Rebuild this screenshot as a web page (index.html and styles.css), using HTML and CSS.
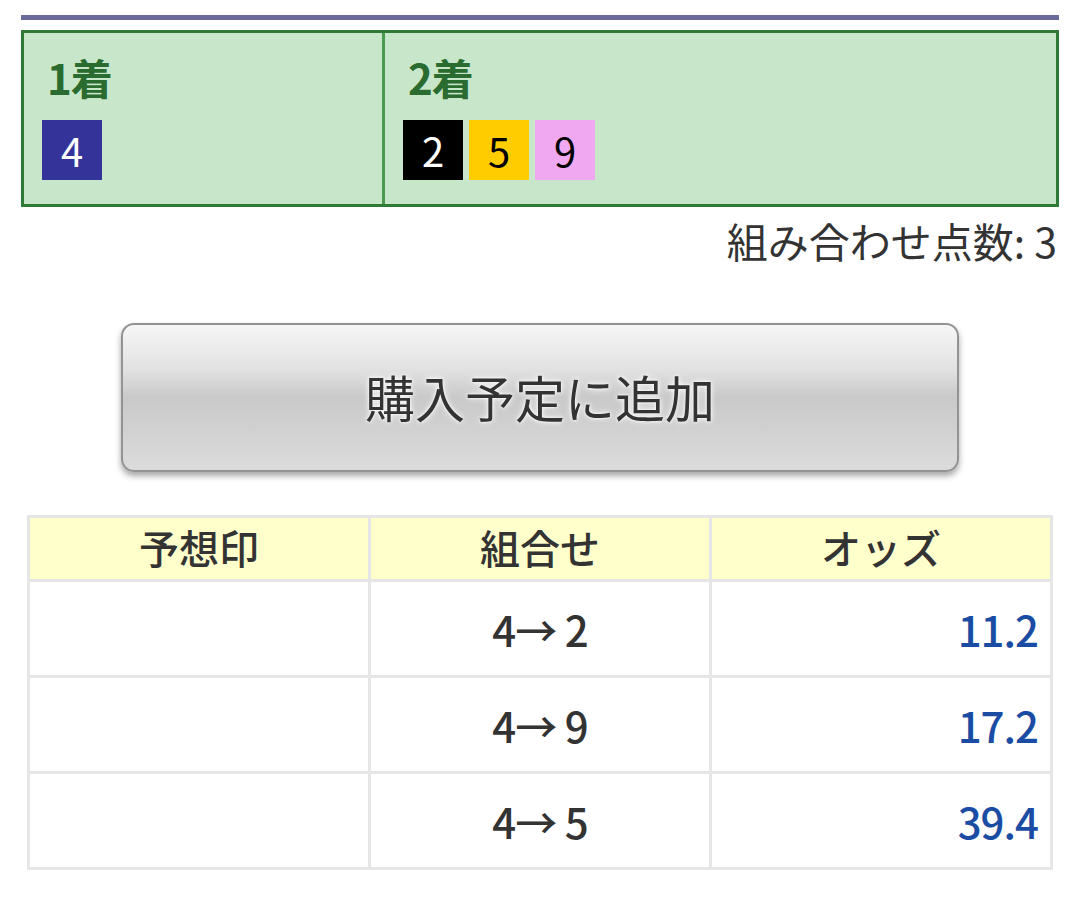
FILE: index.html
```html
<!DOCTYPE html>
<html lang="ja">
<head>
<meta charset="utf-8">
<link rel="stylesheet" href="styles.css">
</head>
<body>
<div class="page">
  <div class="topbar"></div>
  <div class="picks">
    <div class="pick pick-first">
      <div class="pick-title">1着</div>
      <div class="badges">
        <span class="badge b4">4</span>
      </div>
    </div>
    <div class="pick">
      <div class="pick-title">2着</div>
      <div class="badges">
        <span class="badge b2">2</span>
        <span class="badge b5">5</span>
        <span class="badge b9">9</span>
      </div>
    </div>
  </div>
  <div class="count">組み合わせ点数: 3</div>
  <div class="btn-wrap">
    <button class="add-btn">購入予定に追加</button>
  </div>
  <div class="odds-table">
    <div class="th">予想印</div>
    <div class="th">組合せ</div>
    <div class="th">オッズ</div>

    <div class="td"></div>
    <div class="td combo">4→ 2</div>
    <div class="td odds">11.2</div>

    <div class="td"></div>
    <div class="td combo">4→ 9</div>
    <div class="td odds">17.2</div>

    <div class="td"></div>
    <div class="td combo">4→ 5</div>
    <div class="td odds">39.4</div>
  </div>
</div>
</body>
</html>
```

FILE: styles.css
```css
* { box-sizing: border-box; }
html, body { margin: 0; padding: 0; background: #fff; }
body {
  font-family: "Noto Sans CJK JP", "Noto Sans", sans-serif;
  color: #333;
}
.page {
  padding: 15px 21px 0;
}
.topbar {
  height: 5px;
  background: #6b6b9b;
}
.picks {
  margin-top: 10px;
  display: grid;
  grid-template-columns: 361px 1fr;
  border: 3px solid #2f7a34;
  background: #c8e6c9;
  height: 177px;
}
.pick {
  padding: 15px 18px 0;
}
.pick-first {
  border-right: 3px solid #4b9b4f;
}
.pick-title {
  font-size: 42px;
  line-height: 58px;
  font-weight: bold;
  color: #2a6b2f;
  margin-left: 5px;
  letter-spacing: -1px;
}
.badges {
  margin-top: 14px;
  display: flex;
  gap: 6px;
}
.badge {
  width: 60px;
  height: 60px;
  display: flex;
  align-items: center;
  justify-content: center;
  font-size: 40px;
  font-weight: 400;
  line-height: 1;
}
.b4 { background: #333399; color: #fff; }
.b2 { background: #000; color: #fff; }
.b5 { background: #ffcc00; color: #000; }
.b9 { background: #f0a8f0; color: #000; }
.count {
  margin-top: 5px;
  text-align: right;
  font-size: 41px;
  line-height: 57px;
  color: #333;
  padding-right: 2px;
}
.btn-wrap {
  display: flex;
  justify-content: center;
  margin-top: 54px;
}
.add-btn {
  width: 838px;
  height: 149px;
  border: 2px solid #939393;
  border-radius: 13px;
  background: linear-gradient(to bottom, #f6f6f6 0%, #e2e2e2 30%, #c9c9c9 50%, #d2d2d2 75%, #dcdcdc 100%);
  box-shadow: 0 4px 6px rgba(0,0,0,0.35);
  font-family: "Noto Sans CJK JP", "Noto Sans", sans-serif;
  font-size: 50px;
  color: #333;
  text-shadow: 0 0 6px #fff, 0 0 3px #fff;
  padding: 0;
  padding-bottom: 4px;
}
.odds-table {
  width: 1026px;
  margin: 43px auto 0;
  display: grid;
  grid-template-columns: repeat(3, 1fr);
  grid-template-rows: 61px 93px 93px 93px;
  gap: 3px;
  padding: 3px;
  background: #e6e6e6;
}
.th {
  background: #ffffcc;
  display: flex;
  align-items: center;
  justify-content: center;
  font-size: 40px;
  font-weight: 500;
  color: #333;
  padding-bottom: 4px;
}
.td {
  background: #fff;
  display: flex;
  align-items: center;
  font-size: 42px;
  font-weight: 500;
}
.combo {
  justify-content: center;
  color: #333;
  letter-spacing: -1px;
}
.odds {
  justify-content: flex-end;
  padding-right: 12px;
  color: #1b4ca3;
  letter-spacing: -1px;
}
```
